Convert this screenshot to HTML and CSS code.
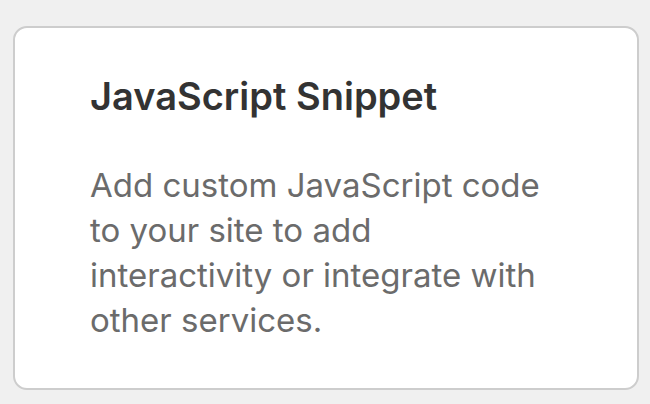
FILE: index.html
```html
<!DOCTYPE html>
<html>
<head>
<meta charset="utf-8">
<link rel="stylesheet" href="styles.css">
</head>
<body>
<div class="page">
  <div class="card">
    <h2 class="card-title">JavaScript Snippet</h2>
    <p class="card-desc">Add custom JavaScript code to your site to add interactivity or integrate with other services.</p>
  </div>
</div>
</body>
</html>
```

FILE: styles.css
```css
html, body {
  margin: 0;
  padding: 0;
  background: #f0f0f0;
}
.page {
  width: 650px;
  height: 404px;
  box-sizing: border-box;
  padding: 26px 11px 14px 13px;
}
.card {
  box-sizing: border-box;
  height: 364px;
  background: #ffffff;
  border: 2px solid #cdcdcd;
  border-radius: 14px;
  padding: 45px 40px 0 75px;
  font-family: Inter, "Liberation Sans", sans-serif;
}
.card-title {
  margin: 0;
  font-size: 38px;
  font-weight: 600;
  color: #333333;
  line-height: 46px;
}
.card-desc {
  margin: 44px 0 0 0;
  font-size: 33px;
  font-weight: 400;
  color: #6b6b6b;
  line-height: 45px;
  width: 465px;
}
```
